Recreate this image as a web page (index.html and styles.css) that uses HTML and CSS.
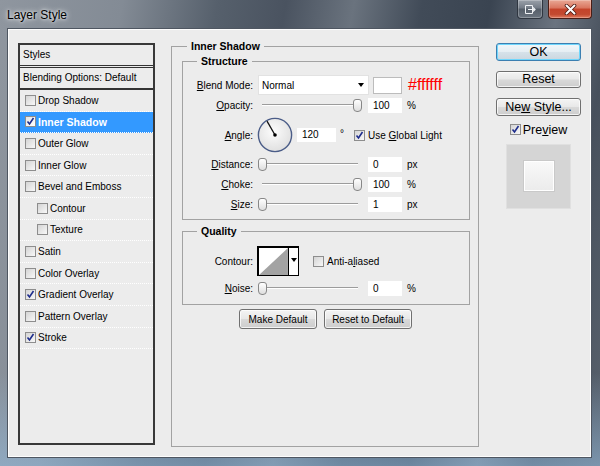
FILE: index.html
```html
<!DOCTYPE html>
<html>
<head>
	<meta charset="UTF-8">
	<title>Layer Style</title>
	<link rel="stylesheet" href="styles.css">
</head>
<body>
	<div class="window">
		<div class="titlebar">
			<span class="title">Layer Style</span>
			<div class="caption">
				<span class="cap-btn restore">
					<svg width="13" height="11" viewBox="0 0 13 11"><path d="M1.5 1.5h7v8h-7z" fill="none" stroke="#eef1f4"/><path d="M4 5.5h7M9 3.5l2 2-2 2" fill="none" stroke="#eef1f4" stroke-width="1.2"/></svg>
				</span>
				<span class="cap-btn close">
					<svg width="13" height="11" viewBox="0 0 13 11"><path d="M2.5 1.5l8 8M10.5 1.5l-8 8" stroke="#4b1a12" stroke-width="3.6" stroke-linecap="round"/><path d="M2.5 1.5l8 8M10.5 1.5l-8 8" stroke="#fff" stroke-width="2" stroke-linecap="round"/></svg>
				</span>
			</div>
		</div>

		<div class="client">
			<!-- left: styles list -->
			<div class="styles">
				<div class="styles-head">Styles</div>
				<div class="styles-blend">Blending Options: Default</div>
				<ul class="fx-list">
					<li><span class="cb"></span>Drop Shadow</li>
					<li class="selected"><span class="cb"><svg width="9" height="9" viewBox="0 0 9 9"><path d="M1.5 4.5l2 2.5 4-6" fill="none" stroke="#1d2c8c" stroke-width="1.6"/></svg></span>Inner Shadow</li>
					<li><span class="cb"></span>Outer Glow</li>
					<li><span class="cb"></span>Inner Glow</li>
					<li><span class="cb"></span>Bevel and Emboss</li>
					<li class="sub"><span class="cb"></span>Contour</li>
					<li class="sub"><span class="cb"></span>Texture</li>
					<li><span class="cb"></span>Satin</li>
					<li><span class="cb"></span>Color Overlay</li>
					<li><span class="cb"><svg width="9" height="9" viewBox="0 0 9 9"><path d="M1.5 4.5l2 2.5 4-6" fill="none" stroke="#1d2c8c" stroke-width="1.6"/></svg></span>Gradient Overlay</li>
					<li><span class="cb"></span>Pattern Overlay</li>
					<li><span class="cb"><svg width="9" height="9" viewBox="0 0 9 9"><path d="M1.5 4.5l2 2.5 4-6" fill="none" stroke="#1d2c8c" stroke-width="1.6"/></svg></span>Stroke</li>
				</ul>
			</div>

			<!-- middle: settings -->
			<fieldset class="panel">
				<legend>Inner Shadow</legend>

				<fieldset class="group structure">
					<legend>Structure</legend>
					<div class="row r-blend">
						<span class="lbl"><u>B</u>lend Mode:</span>
						<div class="select">Normal<span class="arrow"></span></div>
						<span class="swatch"></span>
						<span class="hex">#ffffff</span>
					</div>
					<div class="row r-opacity">
						<span class="lbl"><u>O</u>pacity:</span>
						<div class="slider full"><span class="thumb"></span></div>
						<span class="num">100</span>
						<span class="unit">%</span>
					</div>
					<div class="row r-angle">
						<span class="lbl"><u>A</u>ngle:</span>
						<svg class="dial" width="36" height="36" viewBox="0 0 36 36">
							<defs>
								<radialGradient id="dialfill" cx="45%" cy="40%" r="60%">
									<stop offset="0" stop-color="#fcfcfc"/>
									<stop offset="1" stop-color="#e0e0e0"/>
								</radialGradient>
							</defs>
							<circle cx="18" cy="18" r="16.6" fill="url(#dialfill)" stroke="#4b5d88" stroke-width="1.4"/>
							<path d="M18 18L10 4.2" stroke="#111" stroke-width="1.3"/>
							<circle cx="18" cy="18" r="1.8" fill="#000"/>
						</svg>
						<span class="num angle">120</span>
						<span class="deg">°</span>
						<span class="cb global"><svg width="9" height="9" viewBox="0 0 9 9"><path d="M1.5 4.5l2 2.5 4-6" fill="none" stroke="#1d2c8c" stroke-width="1.6"/></svg></span>
						<span class="cb-text">Use <u>G</u>lobal Light</span>
					</div>
					<div class="row r-distance">
						<span class="lbl"><u>D</u>istance:</span>
						<div class="slider"><span class="thumb"></span></div>
						<span class="num">0</span>
						<span class="unit">px</span>
					</div>
					<div class="row">
						<span class="lbl"><u>C</u>hoke:</span>
						<div class="slider full"><span class="thumb"></span></div>
						<span class="num">100</span>
						<span class="unit">%</span>
					</div>
					<div class="row">
						<span class="lbl"><u>S</u>ize:</span>
						<div class="slider"><span class="thumb"></span></div>
						<span class="num">1</span>
						<span class="unit">px</span>
					</div>
				</fieldset>

				<fieldset class="group quality">
					<legend>Quality</legend>
					<div class="row r-contour">
						<span class="lbl">Contour:</span>
						<div class="contour">
							<svg width="30" height="28" viewBox="0 0 30 28"><rect width="30" height="28" fill="#fff"/><path d="M0 28L30 0V28Z" fill="#a3a3a3"/></svg>
							<span class="contour-drop"><span class="arrow"></span></span>
						</div>
						<span class="cb anti"></span>
						<span class="cb-text">Anti-a<u>l</u>iased</span>
					</div>
					<div class="row r-noise">
						<span class="lbl"><u>N</u>oise:</span>
						<div class="slider"><span class="thumb"></span></div>
						<span class="num">0</span>
						<span class="unit">%</span>
					</div>
				</fieldset>

				<div class="defaults">
					<button class="btn make">Make Default</button>
					<button class="btn reset-def">Reset to Default</button>
				</div>
			</fieldset>

			<!-- right: actions -->
			<div class="side">
				<button class="btn big ok">OK</button>
				<button class="btn big">Reset</button>
				<button class="btn big">Ne<u>w</u> Style...</button>
				<div class="preview-check">
					<span class="cb"><svg width="9" height="9" viewBox="0 0 9 9"><path d="M1.5 4.5l2 2.5 4-6" fill="none" stroke="#1d2c8c" stroke-width="1.6"/></svg></span>
					<span>Pre<u>v</u>iew</span>
				</div>
				<div class="preview-box"><div class="preview-inner"></div></div>
			</div>
		</div>
	</div>
</body>
</html>
```

FILE: styles.css
```css
html, body {
	margin: 0;
	padding: 0;
}
body {
	width: 600px;
	height: 466px;
	overflow: hidden;
	font-family: "Liberation Sans", Arial, sans-serif;
	font-size: 10px;
	color: #000;
}
.window {
	width: 600px;
	height: 466px;
	background:
		linear-gradient(to bottom, rgba(150,190,225,0) 80%, rgba(150,190,225,.55) 100%),
		linear-gradient(100deg, #8f969f 0%, #838b95 18%, #56606c 32%, #4a5360 42%, #6a737e 52%, #414b58 62%, #3a4451 72%, #6b7480 82%, #47505c 90%, #5a636e 100%);
}
.titlebar {
	height: 28px;
	display: flex;
	justify-content: space-between;
	align-items: flex-start;
	padding: 0 8px 0 7px;
}
.title {
	margin-top: 8px;
	font-size: 12px;
	line-height: 14px;
	color: #000;
	text-shadow: 0 0 6px #fff, 0 0 3px rgba(255,255,255,.8);
}
.caption {
	display: flex;
	gap: 5px;
}
.cap-btn {
	height: 19px;
	box-sizing: border-box;
	border: 1px solid #2f3640;
	border-top: none;
	border-radius: 0 0 4px 4px;
	display: flex;
	align-items: center;
	justify-content: center;
	box-shadow: inset 0 0 0 1px rgba(255,255,255,.25);
}
.restore {
	width: 26px;
	background: linear-gradient(#9aa1aa, #737b86 45%, #555e69 50%, #6b747f);
}
.close {
	width: 44px;
	border-color: #4a1e16;
	background: linear-gradient(#e9a895, #d9745e 45%, #c4432a 50%, #c34a30 80%, #e07a5d);
}

.client {
	margin: 0 8px 0 7px;
	height: 430px;
	box-sizing: border-box;
	background: #ececec;
	border: 1px solid #4e5661;
	box-shadow: inset 0 0 0 1px #fdfdfd;
	display: flex;
	align-items: flex-start;
	padding: 11px 10px 0 10px;
}

/* styles list */
.styles {
	width: 137px;
	height: 402px;
	margin-top: 3px;
	box-sizing: border-box;
	border: 2px solid #383838;
	background: #ececec;
}
.styles-head {
	height: 20px;
	line-height: 20px;
	padding-left: 3px;
	border-bottom: 3px double #333;
}
.styles-blend {
	height: 20px;
	line-height: 20px;
	padding-left: 3px;
	border-bottom: 2px solid #333;
}
.fx-list {
	margin: 0;
	padding: 0;
	list-style: none;
}
.fx-list li {
	height: 21.6px;
	box-sizing: border-box;
	display: flex;
	align-items: center;
	padding-left: 5px;
	border-bottom: 1px dotted #fff;
}
.fx-list li.sub {
	padding-left: 17px;
}
.fx-list li.selected {
	background: #3399ff;
	color: #fff;
	font-weight: bold;
	font-size: 10.5px;
}
.cb {
	width: 11px;
	height: 11px;
	flex: none;
	box-sizing: border-box;
	border: 1px solid #8d8d8d;
	background: linear-gradient(135deg, #d4d4d4, #f8f8f8);
	margin-right: 2px;
	display: flex;
	align-items: center;
	justify-content: center;
}
.selected .cb {
	background: linear-gradient(135deg, #e4e4e4, #fff);
}

/* settings panel */
fieldset {
	min-width: 0;
	box-sizing: border-box;
	border: 1px solid #a2a2a2;
}
legend {
	padding: 0 4px;
	font-weight: bold;
	font-size: 10.5px;
	line-height: 13px;
}
.panel {
	width: 308px;
	height: 407px;
	margin: 0 0 0 16px;
	padding: 0 9px 0 10px;
}
.panel > legend {
	margin-left: 5px;
}
.group {
	width: 288px;
	margin: 2px 0 0 0;
	padding: 0 0 7px 0;
}
.group > legend {
	margin-left: 14px;
}
.group.quality {
	margin-top: 5px;
	padding-bottom: 8px;
}
.row {
	display: flex;
	align-items: center;
	height: 16px;
	margin-top: 4px;
}
.r-blend {
	height: 20px;
	margin-top: 7px;
}
.r-opacity {
	margin-top: 2px;
}
.r-angle {
	height: 36px;
	margin-top: 4px;
}
.r-distance {
	margin-top: 3px;
}
.r-contour {
	height: 30px;
	margin-top: 8px;
}
.lbl {
	width: 70px;
	flex: none;
	text-align: right;
}
.select {
	width: 111px;
	height: 20px;
	box-sizing: border-box;
	margin-left: 5px;
	padding: 0 4px 0 3px;
	background: #fff;
	border: 1px solid #e2e2e2;
	display: flex;
	align-items: center;
	justify-content: space-between;
}
.arrow {
	width: 0;
	height: 0;
	border-top: 4px solid #000;
	border-left: 3.5px solid transparent;
	border-right: 3.5px solid transparent;
}
.swatch {
	width: 29px;
	height: 17px;
	box-sizing: border-box;
	margin-left: 4px;
	background: #fff;
	border: 1px solid #bcbcbc;
}
.hex {
	margin-left: 6px;
	color: #f00;
	font-size: 16px;
}
.slider {
	width: 104px;
	height: 14px;
	margin-left: 5px;
	display: flex;
	align-items: center;
	background:
		linear-gradient(#9c9c9c, #9c9c9c) 4px 6px / 96px 1px no-repeat,
		linear-gradient(#fff, #fff) 4px 7px / 96px 1px no-repeat;
}
.slider.full {
	justify-content: flex-end;
}
.thumb {
	width: 9px;
	height: 13px;
	box-sizing: border-box;
	border: 1px solid #878787;
	border-radius: 3px 3px 4px 4px;
	background: linear-gradient(#fff, #dedede);
}
.num {
	width: 34px;
	height: 15px;
	line-height: 15px;
	box-sizing: border-box;
	margin-left: 6px;
	padding-left: 5px;
	background: #fff;
}
.unit {
	margin-left: 5px;
}
.dial {
	margin-left: 4px;
	flex: none;
}
.num.angle {
	width: 39px;
	height: 14px;
	line-height: 14px;
	margin-left: 4px;
}
.deg {
	margin-left: 4px;
	margin-bottom: 3px;
}
.cb.global {
	margin-left: 10px;
}
.cb-text {
	margin-left: 1px;
}
.contour {
	margin-left: 4px;
	height: 30px;
	box-sizing: border-box;
	border: 1px solid #000;
	border-top-width: 2px;
	border-left-width: 2px;
	display: flex;
	background: #fff;
}
.contour svg {
	width: 29px;
	height: 27px;
	display: block;
}
.contour-drop {
	width: 9px;
	border-left: 1px solid #000;
	display: flex;
	justify-content: center;
	padding-top: 10px;
}
.cb.anti {
	margin-left: 14px;
}

.btn {
	height: 20px;
	padding: 0;
	box-sizing: border-box;
	border: 1px solid #707070;
	border-radius: 3px;
	background: linear-gradient(#f4f4f4, #e8e8e8 48%, #d9d9d9 52%, #cdcdcd);
	box-shadow: inset 0 0 0 1px rgba(255,255,255,.75);
	font-family: "Liberation Sans", Arial, sans-serif;
	font-size: 10px;
	color: #000;
}
.defaults {
	display: flex;
	justify-content: center;
	gap: 7px;
	margin-top: 4px;
}
.btn.make {
	width: 78px;
}
.btn.reset-def {
	width: 88px;
}

/* right column */
.side {
	width: 85px;
	margin: 3px 0 0 17px;
	display: flex;
	flex-direction: column;
	align-items: center;
	font-size: 12.5px;
}
.btn.big {
	width: 85px;
	height: 17.5px;
	font-size: 12.5px;
	margin-bottom: 10px;
}
.btn.ok {
	border-color: #3c7fb1;
	box-shadow: inset 0 0 0 1px #6fd6fc;
	background: linear-gradient(#f2f7fa, #e6eef3 48%, #d6e2ea 52%, #cbd6de);
}
.preview-check {
	display: flex;
	align-items: center;
	height: 14px;
	margin-top: -3px;
}
.preview-box {
	width: 65px;
	height: 65px;
	margin-top: 7px;
	box-sizing: border-box;
	background: #d5d5d5;
	border: 1px solid #e0e0e0;
	display: flex;
	align-items: center;
	justify-content: center;
}
.preview-inner {
	width: 32px;
	height: 32px;
	box-sizing: border-box;
	background: linear-gradient(#f9f9f9, #ebebeb);
	border: 1px solid #c9c9c9;
	box-shadow: inset 0 0 0 1px #fff;
}
```
